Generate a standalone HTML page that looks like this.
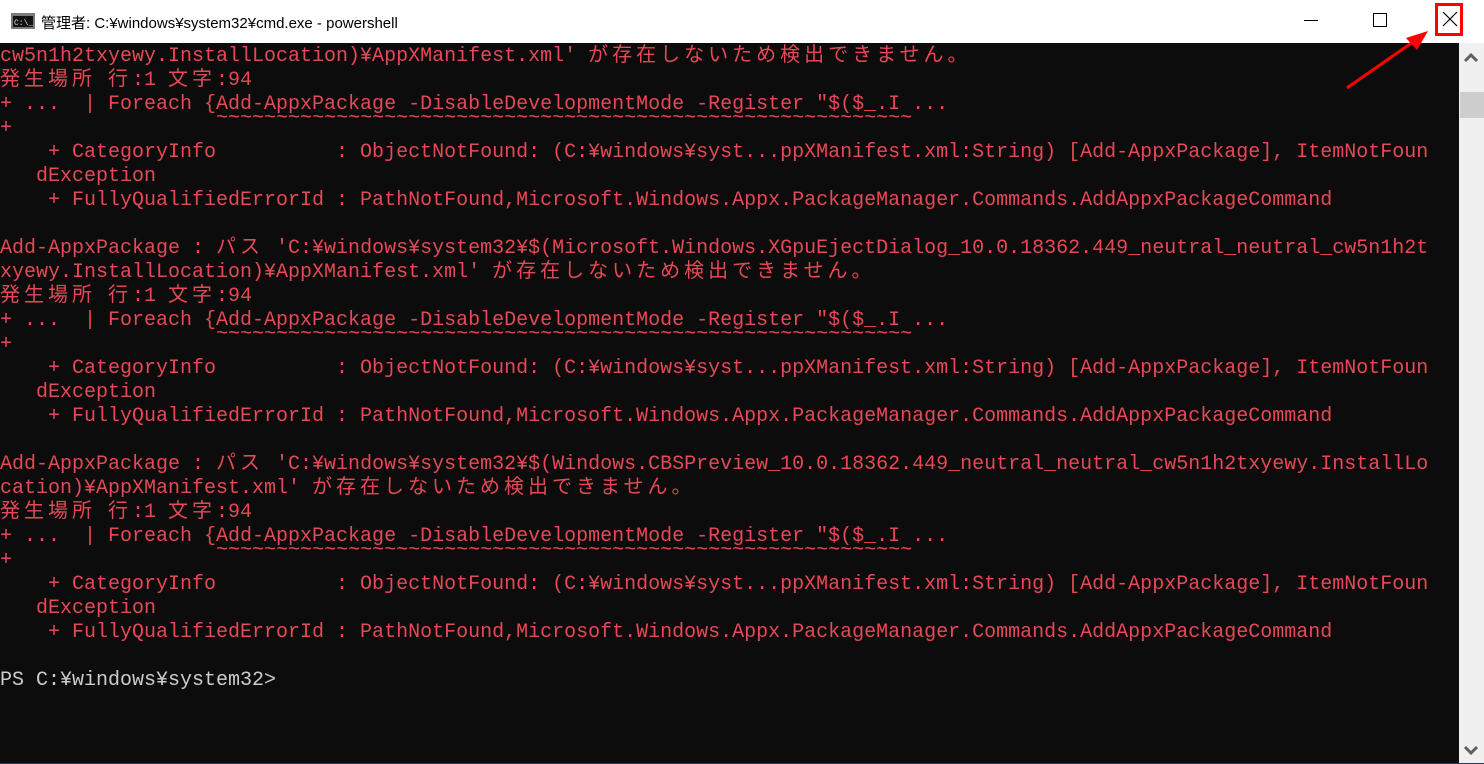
<!DOCTYPE html>
<html><head><meta charset="utf-8"><style>
html,body{margin:0;padding:0;width:1484px;height:764px;overflow:hidden;background:#fff;}
#title{position:absolute;left:0;top:0;width:1484px;height:43px;background:#fff;font-family:"Liberation Sans","Noto Sans CJK JP",sans-serif;font-size:15px;color:#000;}
#title .t{position:absolute;left:41px;top:12px;}
#con{position:absolute;left:0;top:43px;width:1459px;height:720px;background:#0c0c0c;overflow:hidden;font-family:"Liberation Mono","Noto Sans CJK JP",monospace;font-size:20px;color:#e74856;}
#in{position:absolute;left:0;top:2px;}
#in div{height:24px;line-height:24px;white-space:pre;overflow:visible;}
.j{letter-spacing:4px;font-family:"Noto Sans CJK JP",sans-serif;font-size:20px;line-height:24px;display:inline-block;height:24px;vertical-align:top;position:relative;top:-4px;}
.td{position:relative;top:-10px;}
.w{color:#cccccc;}
#sb{position:absolute;left:1459px;top:43px;width:25px;height:720px;background:#f0f0f0;}
#thumb{position:absolute;left:1460px;top:92px;width:24px;height:26px;background:#cdcdcd;}
#bl{position:absolute;left:0;top:763px;width:1484px;height:1px;background:#2b3a55;}
</style></head><body>
<div id="title">
<svg style="position:absolute;left:11px;top:13px" width="24" height="16" viewBox="0 0 24 16"><rect x="0" y="0" width="24" height="16" fill="#7a7a7a"/><rect x="2" y="3" width="20" height="11" fill="#111"/><text x="3" y="12" font-family="Liberation Mono" font-size="8" fill="#ddd">C:\_</text></svg>
<span class="t">管理者: C:¥windows¥system32¥cmd.exe - powershell</span>
<div style="position:absolute;left:1304px;top:20px;width:14px;height:1px;background:#000"></div>
<div style="position:absolute;left:1373px;top:13px;width:12px;height:12px;border:1px solid #000"></div>
<div style="position:absolute;left:1435px;top:3px;width:28px;height:33px;border:3px solid #ff0000;box-sizing:border-box"></div>
<svg style="position:absolute;left:1440px;top:9px" width="20" height="20"><path d="M3 3 L17 17 M17 3 L3 17" stroke="#000" stroke-width="1.2"/></svg>
</div>
<div id="con"><div id="in">
<div>cw5n1h2txyewy.InstallLocation)¥AppXManifest.xml' <span class="j">が存在しないため検出できません。</span></div>
<div><span class="j">発生場所</span> <span class="j">行</span>:1 <span class="j">文字</span>:94</div>
<div>+ ...  | Foreach {Add-AppxPackage -DisableDevelopmentMode -Register "$($_.I ...</div>
<div>+                 <span class="td">~~~~~~~~~~~~~~~~~~~~~~~~~~~~~~~~~~~~~~~~~~~~~~~~~~~~~~~~~~</span></div>
<div>    + CategoryInfo          : ObjectNotFound: (C:¥windows¥syst...ppXManifest.xml:String) [Add-AppxPackage], ItemNotFoun</div>
<div>   dException</div>
<div>    + FullyQualifiedErrorId : PathNotFound,Microsoft.Windows.Appx.PackageManager.Commands.AddAppxPackageCommand</div>
<div></div>
<div>Add-AppxPackage : <span class="j">パス</span> 'C:¥windows¥system32¥$(Microsoft.Windows.XGpuEjectDialog_10.0.18362.449_neutral_neutral_cw5n1h2t</div>
<div>xyewy.InstallLocation)¥AppXManifest.xml' <span class="j">が存在しないため検出できません。</span></div>
<div><span class="j">発生場所</span> <span class="j">行</span>:1 <span class="j">文字</span>:94</div>
<div>+ ...  | Foreach {Add-AppxPackage -DisableDevelopmentMode -Register "$($_.I ...</div>
<div>+                 <span class="td">~~~~~~~~~~~~~~~~~~~~~~~~~~~~~~~~~~~~~~~~~~~~~~~~~~~~~~~~~~</span></div>
<div>    + CategoryInfo          : ObjectNotFound: (C:¥windows¥syst...ppXManifest.xml:String) [Add-AppxPackage], ItemNotFoun</div>
<div>   dException</div>
<div>    + FullyQualifiedErrorId : PathNotFound,Microsoft.Windows.Appx.PackageManager.Commands.AddAppxPackageCommand</div>
<div></div>
<div>Add-AppxPackage : <span class="j">パス</span> 'C:¥windows¥system32¥$(Windows.CBSPreview_10.0.18362.449_neutral_neutral_cw5n1h2txyewy.InstallLo</div>
<div>cation)¥AppXManifest.xml' <span class="j">が存在しないため検出できません。</span></div>
<div><span class="j">発生場所</span> <span class="j">行</span>:1 <span class="j">文字</span>:94</div>
<div>+ ...  | Foreach {Add-AppxPackage -DisableDevelopmentMode -Register "$($_.I ...</div>
<div>+                 <span class="td">~~~~~~~~~~~~~~~~~~~~~~~~~~~~~~~~~~~~~~~~~~~~~~~~~~~~~~~~~~</span></div>
<div>    + CategoryInfo          : ObjectNotFound: (C:¥windows¥syst...ppXManifest.xml:String) [Add-AppxPackage], ItemNotFoun</div>
<div>   dException</div>
<div>    + FullyQualifiedErrorId : PathNotFound,Microsoft.Windows.Appx.PackageManager.Commands.AddAppxPackageCommand</div>
<div></div>
<div class="w">PS C:¥windows¥system32&gt;</div>
</div></div>
<div id="sb"></div>
<div id="thumb"></div>
<svg style="position:absolute;left:1463px;top:53px" width="16" height="10"><path d="M2 8 L8 2 L14 8" stroke="#606060" stroke-width="3" fill="none"/></svg>
<svg style="position:absolute;left:1463px;top:745px" width="16" height="10"><path d="M2 2 L8 8 L14 2" stroke="#606060" stroke-width="3" fill="none"/></svg>
<svg style="position:absolute;left:1340px;top:25px" width="100" height="70"><path d="M7 63 L80 12" stroke="#ff0000" stroke-width="3"/><path d="M88 6 L66 13 L77 25 Z" fill="#ff0000"/></svg>
<div id="bl"></div>
</body></html>
